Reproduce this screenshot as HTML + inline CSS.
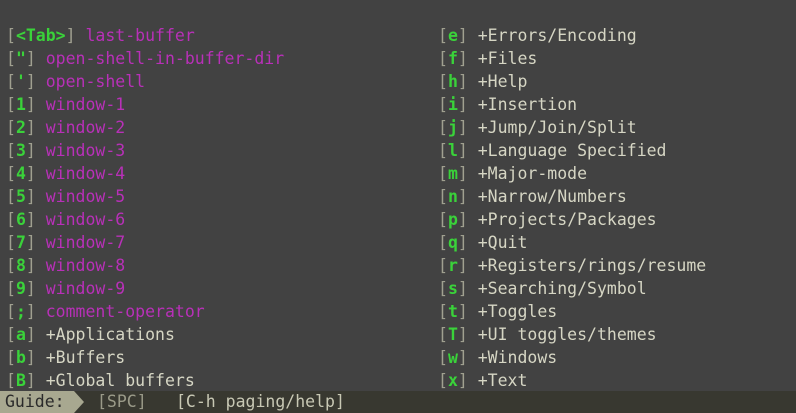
<!DOCTYPE html><html><head><style>
body{margin:0;width:796px;height:413px;background:#424242;overflow:hidden;font-family:"DejaVu Sans Mono","Liberation Mono",monospace;font-size:16.5px;color:#d6d6c4;position:relative}
.col{position:absolute;top:24px;white-space:pre;line-height:23px}
.k{color:#3ad23a;font-weight:bold}.b{color:#a0a090}.m{color:#b830b8}
.bar{position:absolute;left:0;top:391px;width:796px;height:22px;background:#383830;line-height:22px;white-space:pre}
.g{position:absolute;left:0;top:0;width:74px;height:22px;background:#a8a890;color:#2a2a2a}
.g:after{content:"";position:absolute;right:-10px;top:0;border-left:10px solid #a8a890;border-top:11px solid transparent;border-bottom:11px solid transparent}
</style></head><body>
<div class="col" style="left:6px"><span class="b">[</span><span class="k">&lt;Tab&gt;</span><span class="b">]</span> <span class="m">last-buffer</span>
<span class="b">[</span><span class="k">"</span><span class="b">]</span> <span class="m">open-shell-in-buffer-dir</span>
<span class="b">[</span><span class="k">'</span><span class="b">]</span> <span class="m">open-shell</span>
<span class="b">[</span><span class="k">1</span><span class="b">]</span> <span class="m">window-1</span>
<span class="b">[</span><span class="k">2</span><span class="b">]</span> <span class="m">window-2</span>
<span class="b">[</span><span class="k">3</span><span class="b">]</span> <span class="m">window-3</span>
<span class="b">[</span><span class="k">4</span><span class="b">]</span> <span class="m">window-4</span>
<span class="b">[</span><span class="k">5</span><span class="b">]</span> <span class="m">window-5</span>
<span class="b">[</span><span class="k">6</span><span class="b">]</span> <span class="m">window-6</span>
<span class="b">[</span><span class="k">7</span><span class="b">]</span> <span class="m">window-7</span>
<span class="b">[</span><span class="k">8</span><span class="b">]</span> <span class="m">window-8</span>
<span class="b">[</span><span class="k">9</span><span class="b">]</span> <span class="m">window-9</span>
<span class="b">[</span><span class="k">;</span><span class="b">]</span> <span class="m">comment-operator</span>
<span class="b">[</span><span class="k">a</span><span class="b">]</span> +Applications
<span class="b">[</span><span class="k">b</span><span class="b">]</span> +Buffers
<span class="b">[</span><span class="k">B</span><span class="b">]</span> +Global buffers</div>
<div class="col" style="left:438px"><span class="b">[</span><span class="k">e</span><span class="b">]</span> +Errors/Encoding
<span class="b">[</span><span class="k">f</span><span class="b">]</span> +Files
<span class="b">[</span><span class="k">h</span><span class="b">]</span> +Help
<span class="b">[</span><span class="k">i</span><span class="b">]</span> +Insertion
<span class="b">[</span><span class="k">j</span><span class="b">]</span> +Jump/Join/Split
<span class="b">[</span><span class="k">l</span><span class="b">]</span> +Language Specified
<span class="b">[</span><span class="k">m</span><span class="b">]</span> +Major-mode
<span class="b">[</span><span class="k">n</span><span class="b">]</span> +Narrow/Numbers
<span class="b">[</span><span class="k">p</span><span class="b">]</span> +Projects/Packages
<span class="b">[</span><span class="k">q</span><span class="b">]</span> +Quit
<span class="b">[</span><span class="k">r</span><span class="b">]</span> +Registers/rings/resume
<span class="b">[</span><span class="k">s</span><span class="b">]</span> +Searching/Symbol
<span class="b">[</span><span class="k">t</span><span class="b">]</span> +Toggles
<span class="b">[</span><span class="k">T</span><span class="b">]</span> +UI toggles/themes
<span class="b">[</span><span class="k">w</span><span class="b">]</span> +Windows
<span class="b">[</span><span class="k">x</span><span class="b">]</span> +Text</div>
<div class="bar"><div class="g" style="padding-left:5px;width:69px">Guide:</div><span style="position:absolute;left:97px;color:#9a9a88">[SPC]</span><span style="position:absolute;left:176px;color:#c8c8b4">[C-h paging/help]</span></div>
</body></html>
